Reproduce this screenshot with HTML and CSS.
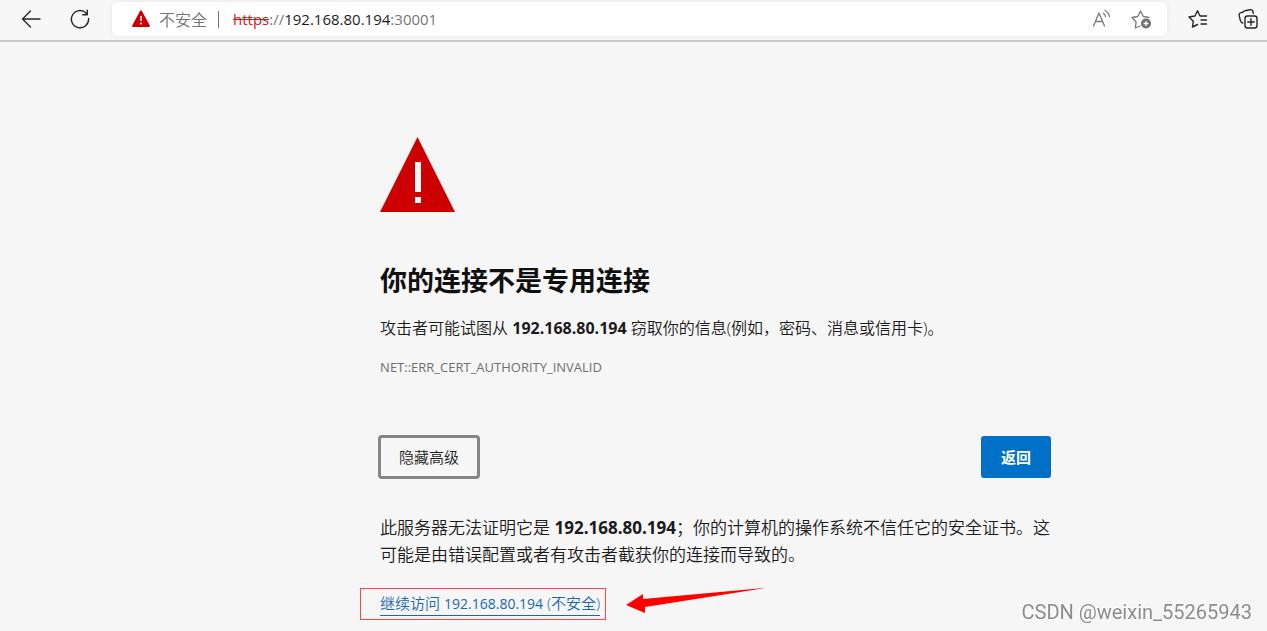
FILE: index.html
```html
<!DOCTYPE html>
<html lang="zh-CN">
<head>
<meta charset="utf-8">
<meta name="viewport" content="width=device-width, initial-scale=1">
<title>隐私错误</title>
<link rel="stylesheet" href="styles.css">
</head>
<body>
<header class="toolbar">
  <nav class="nav-buttons">
    <button class="icon-button" type="button" aria-label="后退">
      <svg width="20" height="20" viewBox="0 0 20 20" fill="none" stroke="#262626" stroke-width="1.4" stroke-linecap="round" stroke-linejoin="round"><path d="M19 10H1.5M9.500 2L1.500 10l8 8"/></svg>
    </button>
    <button class="icon-button" type="button" aria-label="刷新">
      <svg width="20" height="20" viewBox="0 0 20 20" fill="none" stroke="#262626" stroke-width="1.4" stroke-linecap="round" stroke-linejoin="round"><path d="M18.600 9.500A8.600 8.600 0 1 1 16.200 4.200M17.300 1.200v4.600h-4.600"/></svg>
    </button>
  </nav>
  <div class="address-bar">
    <svg class="warn-icon" width="18" height="18" viewBox="0 0 18 18"><path d="M9 1.200L17 16H1z" fill="#c00" stroke="#c00" stroke-width="1.800" stroke-linejoin="round"/><path d="M9 6v5" stroke="#fff" stroke-width="1.500"/><circle cx="9" cy="13.500" r="1" fill="#fff"/></svg>
    <span class="security">不安全</span>
    <span class="divider"></span>
    <span class="url"><s class="scheme">https</s>://<span class="url-host">192.168.80.194</span>:30001</span>
    <button class="icon-button read-aloud" type="button" aria-label="大声朗读">
      <svg width="20" height="20" viewBox="0 0 20 20" fill="none" stroke="#7a7a7a" stroke-width="1.300" stroke-linecap="round" stroke-linejoin="round"><path d="M1.500 17L7 4l5.500 13M3.400 12.500h7.200M11.200 4.300c1.300.8 2.100 1.900 2.300 3.400M13 1.500c2.500 1.200 4 3.200 4.500 6"/></svg>
    </button>
    <button class="icon-button" type="button" aria-label="添加到收藏夹">
      <svg width="22" height="20" viewBox="0 0 22 20"><path d="M9 17L4.300 19l.8-6L1 8.500l5.700-1L9.500 2l2.800 5.500 5.700 1" fill="none" stroke="#7a7a7a" stroke-width="1.300" stroke-linejoin="round" stroke-linecap="round"/><circle cx="15" cy="14.500" r="5" fill="#6e6e6e"/><path d="M12.500 14.500h5M15 12v5" stroke="#fff" stroke-width="1.300"/></svg>
    </button>
  </div>
  <div class="tool-buttons">
    <button class="icon-button" type="button" aria-label="收藏夹">
      <svg width="20" height="20" viewBox="0 0 20 20" fill="none" stroke="#262626" stroke-width="1.400" stroke-linecap="round" stroke-linejoin="round"><path d="M9.500 15.500L4.500 18l.8-5.800L1 8l5.900-1L9.500 1.800 12 7h6.500M13 11h5.500M13 15h5.500"/></svg>
    </button>
    <button class="icon-button" type="button" aria-label="集锦">
      <svg width="20" height="20" viewBox="0 0 20 20" fill="none" stroke="#262626" stroke-width="1.400" stroke-linecap="round" stroke-linejoin="round"><rect x="7" y="7" width="12" height="12" rx="2.500"/><path d="M13 9.800v6.400M9.800 13h6.400M4.800 14c-1.500-.3-2-1-2.400-2.400L1.200 6.700C.9 5 1.500 4 3 3.600l1.700-.5M4.700 3.500C5 2.500 6 2 7 1.700l5-1c1.500-.2 2.500.3 2.900 1.800l.4 1.700"/></svg>
    </button>
  </div>
</header>
<main class="interstitial">
  <svg class="big-warning" width="76" height="76" viewBox="0 0 76 76" role="img" aria-label="警告"><path d="M37.500 0L75 75H0z" fill="#c00"/><path d="M35 25h6v30h-6zM35 60h6v6h-6z" fill="#f6f6f6"/></svg>
  <h1 class="title">你的连接不是专用连接</h1>
  <p class="summary">攻击者可能试图从 <strong>192.168.80.194</strong> 窃取你的信息(例如，密码、消息或信用卡)。</p>
  <p class="error-code">NET::ERR_CERT_AUTHORITY_INVALID</p>
  <div class="actions">
    <button class="button button-outline" type="button">隐藏高级</button>
    <button class="button button-primary" type="button">返回</button>
  </div>
  <p class="details">此服务器无法证明它是 <strong>192.168.80.194</strong>；你的计算机的操作系统不信任它的安全证书。这可能是由错误配置或者有攻击者截获你的连接而导致的。</p>
  <div class="proceed-row">
    <div class="highlight"><a class="proceed" href="#">继续访问 <span class="proceed-host">192.168.80.194</span> (不安全)</a></div>
    <svg class="arrow" width="140" height="26" viewBox="0 0 140 26"><path d="M0 17L17 6v5L139 0 19 19v6z" fill="#f00"/></svg>
  </div>
</main>
<div class="watermark">CSDN @weixin_55265943</div>
</body>
</html>
```
FILE: styles.css
```css
* { box-sizing: border-box; }

body {
  margin: 0;
  background: #f6f6f6;
  color: #1b1b1b;
  font-family: "Open Sans", "Noto Sans CJK SC", sans-serif;
  font-weight: 350;
}

button { font: inherit; cursor: pointer; }

.toolbar {
  display: flex;
  align-items: center;
  height: 42px;
  padding: 0 8px 2px 20px;
  background: #f7f7f7;
  border-bottom: 2px solid #cacaca;
}

.nav-buttons { display: flex; gap: 27px; margin-right: 21px; }

.icon-button {
  display: flex;
  align-items: center;
  justify-content: center;
  width: 22px;
  height: 22px;
  padding: 0;
  border: 0;
  background: none;
}

.address-bar {
  display: flex;
  flex: 1;
  align-items: center;
  min-width: 0;
  height: 34px;
  padding: 0 14px 0 20px;
  border-radius: 5px;
  background: #fff;
  box-shadow: 0 0 4px #e4e4e4;
  font-size: 15px;
  color: #767676;
}

.warn-icon { margin-right: 9px; }
.security { font-size: 16px; }
.divider { width: 1px; height: 17px; margin: 0 14px 0 11px; background: #777; }
.url { flex: 1; font-weight: 400; }
.scheme { color: #d0181e; }
.url-host { color: #1b1b1b; }
.read-aloud { margin-right: 18px; }

.tool-buttons { display: flex; gap: 28px; margin-left: 20px; }

.interstitial {
  width: 671px;
  max-width: 70%;
  margin-left: 30%;
  padding-top: 95px;
}

.big-warning { display: block; }

.title {
  margin: 48px 0 0;
  font-size: 27px;
  line-height: 40px;
  font-weight: 700;
  color: #101010;
}

.summary {
  margin: 15px 0 0;
  font-size: 16px;
  line-height: 24px;
}

strong { font-weight: 700; }

.error-code {
  margin: 17px 0 0;
  font-size: 13px;
  font-weight: 400;
  line-height: 20px;
  color: #6f6f6f;
}

.actions {
  display: flex;
  align-items: center;
  justify-content: space-between;
  margin: 58px 0 0 -2px;
}

.button {
  font-size: 15px;
  line-height: 22px;
  border-radius: 3px;
}

.button-outline {
  padding: 8px 18px;
  border: 3px solid #858585;
  border-radius: 4px;
  background: transparent;
  color: #1b1b1b;
}

.button-primary {
  padding: 10px 20px;
  border: 0;
  background: #0070c9;
  color: #fff;
  font-weight: 700;
}

.details {
  margin: 35px 0 0;
  font-size: 17px;
  line-height: 27px;
}

.proceed-row {
  display: flex;
  align-items: flex-start;
  gap: 20px;
  margin: 20px 0 0 -20px;
}

.highlight {
  padding: 3px 5px 3px 19px;
  border: 1px solid #ff4545;
  font-size: 15px;
  line-height: 22px;
}

.proceed {
  display: block;
  border-bottom: 1px solid #1967b3;
  color: #1967b3;
  text-decoration: none;
}

.proceed-host { font-size: 14px; font-weight: 400; }
.arrow { flex: none; }

.watermark {
  position: fixed;
  right: 15px;
  bottom: 6px;
  font-family: Roboto, sans-serif;
  font-size: 20px;
  font-weight: 400;
  line-height: 26px;
  color: #8c8c8c;
  text-shadow: -1px -1px 0 #fff;
}
```
